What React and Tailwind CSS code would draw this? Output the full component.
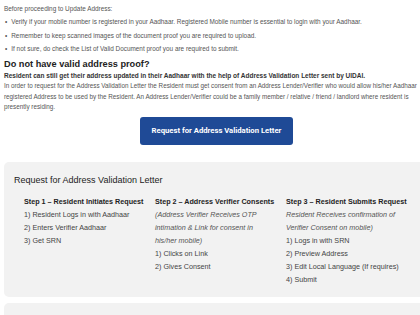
import React from 'react';

const BULLETS = [
  'Verify if your mobile number is registered in your Aadhaar. Registered Mobile number is essential to login with your Aadhaar.',
  'Remember to keep scanned images of the document proof you are required to upload.',
  'If not sure, do check the List of Valid Document proof you are required to submit.',
];

const STEPS = [
  {
    title: 'Step 1 – Resident Initiates Request',
    note: null,
    items: ['1) Resident Logs in with Aadhaar', '2) Enters Verifier Aadhaar', '3) Get SRN'],
  },
  {
    title: 'Step 2 – Address Verifier Consents',
    note: '(Address Verifier Receives OTP intimation & Link for consent in his/her mobile)',
    items: ['1) Clicks on Link', '2) Gives Consent'],
  },
  {
    title: 'Step 3 – Resident Submits Request',
    note: 'Resident Receives confirmation of Verifier Consent on mobile)',
    items: ['1) Logs in with SRN', '2) Preview Address', '3) Edit Local Language (If requires)', '4) Submit'],
  },
];

function StepColumn({ step }) {
  return (
    <div className="w-[125px] shrink-0 text-[7.2px] leading-[13px] text-[#444]">
      <div className="font-bold text-[#222] whitespace-nowrap">{step.title}</div>
      {step.note && <div className="italic text-[#555] pr-[8px]">{step.note}</div>}
      {step.items.map(item => (
        <div key={item} className="whitespace-nowrap">{item}</div>
      ))}
    </div>
  );
}

export default function App() {
  return (
    <div className="w-[420px] h-[315px] overflow-hidden bg-white font-['Liberation_Sans',Arial,sans-serif] text-[#444]">
      {/* Intro */}
      <div className="pl-[4px] pt-[5px]">
        <p className="text-[6.4px] leading-[8px] text-[#555]">Before proceeding to Update Address:</p>
        <ul className="mt-[5px] space-y-[5.5px]">
          {BULLETS.map(b => (
            <li key={b} className="flex items-start gap-[4px] text-[6.4px] leading-[8px] text-[#555]">
              <span className="pl-[1px]">•</span>
              <span>{b}</span>
            </li>
          ))}
        </ul>

        <h3 className="mt-[5px] text-[9.2px] leading-[13px] font-bold text-[#222]">Do not have valid address proof?</h3>
        <p className="text-[6.5px] leading-[10px] font-bold text-[#333]">
          Resident can still get their address updated in their Aadhaar with the help of Address Validation Letter sent by UIDAI.
        </p>
        <p className="text-[6.3px] leading-[10.5px] text-[#555]">
          In order to request for the Address Validation Letter the Resident must get consent from an Address Lender/Verifier who would allow his/her Aadhaar registered Address to be used by the Resident. An Address Lender/Verifier could be a family member / relative / friend / landlord where resident is presently residing.
        </p>

        <div className="flex justify-center pl-[9px] mt-[4px]">
          <button className="w-[153px] h-[28px] rounded-[3px] bg-[#1f4a96] text-white text-[7.7px] font-bold font-['Roboto',sans-serif]">
            Request for Address Validation Letter
          </button>
        </div>
      </div>

      {/* Steps panel */}
      <div className="ml-[4px] mt-[17px] h-[135px] rounded-l-[5px] bg-[#f2f2f2] pl-[10px] pt-[12px]">
        <h4 className="text-[9px] leading-[12px] text-[#222]">Request for Address Validation Letter</h4>
        <div className="mt-[9px] ml-[10px] flex gap-[6px]">
          {STEPS.map(s => (
            <StepColumn key={s.title} step={s} />
          ))}
        </div>
      </div>

      <div className="ml-[4px] mt-[6px] h-[20px] rounded-l-[5px] bg-[#f2f2f2]" />
    </div>
  );
}
